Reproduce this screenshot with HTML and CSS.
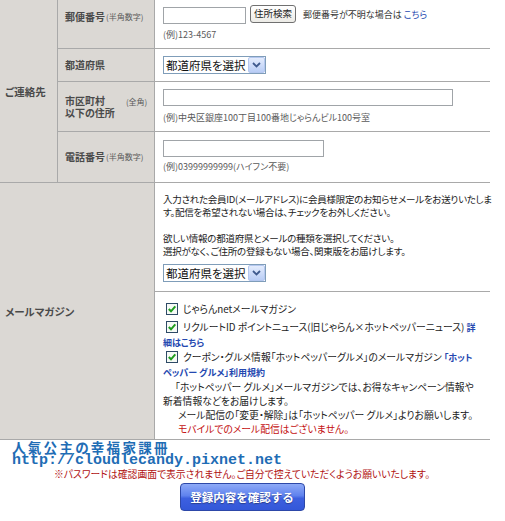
FILE: index.html
```html
<!DOCTYPE html>
<html lang="ja">
<head>
<meta charset="utf-8">
<title>会員登録</title>
<link rel="stylesheet" href="styles.css">
</head>
<body>
<div class="form">
  <div class="sec sec-contact"><b>ご連絡先</b></div>

  <div class="lbl lbl-top r1"><b>郵便番号</b><small>(半角数字)</small></div>
  <div class="fld fld-zip r1">
    <div class="inline">
      <input class="txt w-zip" type="text">
      <button class="btn-search" type="button">住所検索</button>
      <span class="note">郵便番号が不明な場合は <a class="link" href="#">こちら</a></span>
    </div>
    <div class="ex ex-zip">(例)123-4567</div>
  </div>

  <div class="lbl r2"><b>都道府県</b></div>
  <div class="fld fld-mid r2">
    <div class="sel"><span class="sel-text">都道府県を選択</span><span class="sel-btn"><svg width="9" height="6" viewBox="0 0 9 6"><path d="M1 1 L4.5 4.5 L8 1" fill="none" stroke="#3f5a8e" stroke-width="1.8"/></svg></span></div>
  </div>

  <div class="lbl r3">
    <b class="two">市区町村<br>以下の住所</b><small class="zen">(全角)</small>
  </div>
  <div class="fld fld-addr r3">
    <input class="txt w-addr" type="text">
    <div class="ex ex-addr">(例)中央区銀座100丁目100番地じゃらんビル100号室</div>
  </div>

  <div class="lbl r4"><b>電話番号</b><small>(半角数字)</small></div>
  <div class="fld fld-tel r4">
    <input class="txt w-tel" type="text">
    <div class="ex ex-tel">(例)03999999999(ハイフン不要)</div>
  </div>

  <div class="sec sec-mail"><b>メールマガジン</b></div>
  <div class="fld-mail r5">
    <div class="mail-top">
      <p class="para">入力された会員ID(メールアドレス)に会員様限定のお知らせメールをお送りいたしま<br>す。配信を希望されない場合は、チェックをお外しください。</p>
      <p class="para para-gap">欲しい情報の都道府県とメールの種類を選択してください。<br>選択がなく、ご住所の登録もない場合、関東版をお届けします。</p>
      <div class="sel sel-mail"><span class="sel-text">都道府県を選択</span><span class="sel-btn"><svg width="9" height="6" viewBox="0 0 9 6"><path d="M1 1 L4.5 4.5 L8 1" fill="none" stroke="#3f5a8e" stroke-width="1.8"/></svg></span></div>
    </div>
    <div class="mail-bottom">
      <p class="item item-first"><span class="chk"><svg width="12" height="12" viewBox="0 0 12 12"><rect x="0.5" y="0.5" width="11" height="11" fill="#f6faf6" stroke="#2e4a66"/><path d="M2.8 6 L5 8.3 L9.3 3.3" fill="none" stroke="#1f9d1f" stroke-width="2"/></svg></span>じゃらんnetメールマガジン</p>
      <p class="item"><span class="chk"><svg width="12" height="12" viewBox="0 0 12 12"><rect x="0.5" y="0.5" width="11" height="11" fill="#f6faf6" stroke="#2e4a66"/><path d="M2.8 6 L5 8.3 L9.3 3.3" fill="none" stroke="#1f9d1f" stroke-width="2"/></svg></span>リクルートID ポイントニュース(旧じゃらん×ホットペッパーニュース) <a class="link small" href="#">詳<br>細はこちら</a></p>
      <p class="item"><span class="chk"><svg width="12" height="12" viewBox="0 0 12 12"><rect x="0.5" y="0.5" width="11" height="11" fill="#f6faf6" stroke="#2e4a66"/><path d="M2.8 6 L5 8.3 L9.3 3.3" fill="none" stroke="#1f9d1f" stroke-width="2"/></svg></span>クーポン・グルメ情報「ホットペッパーグルメ」のメールマガジン <a class="link small" href="#">「ホット<br>ペッパー グルメ」利用規約</a></p>
      <p class="desc"><span class="ind1">「ホットペッパー グルメ」メールマガジンでは、お得なキャンペーン情報や</span><br>新着情報などをお届けします。<br><span class="ind2">メール配信の「変更・解除」は「ホットペッパー グルメ」よりお願いします。</span><br><span class="ind2 red">モバイルでのメール配信はございません。</span></p>
    </div>
  </div>
</div>

<div class="mark">
  <div class="mark-title">人氣公主の幸福家課冊</div>
  <div class="mark-url">http://cloudlecandy.pixnet.net</div>
</div>

<div class="footer">
  <p class="warn">※パスワードは確認画面で表示されません。ご自分で控えていただくようお願いいたします。</p>
  <button class="submit" type="button">登録内容を確認する</button>
</div>
</body>
</html>
```

FILE: styles.css
```css
html, body {
  margin: 0;
  padding: 0;
  background: #ffffff;
}

body {
  font-family: "Noto Sans CJK JP", "Noto Sans", sans-serif;
  font-feature-settings: "palt";
  color: #222222;
  font-size: 10px;
}

p { margin: 0; }

.form {
  display: grid;
  width: 490px;
  grid-template-columns: 58px 97px 335px;
  grid-template-rows: 49px 33px 50px 51px 257px;
}

.form > div {
  box-sizing: border-box;
  border-bottom: 1px solid #a9a9a9;
}

.sec {
  background: #dbd8d4;
  border-right: 1px solid #a9a9a9;
  display: flex;
  align-items: center;
  padding-left: 5px;
  color: #4a4a4a;
  font-size: 10.5px;
  line-height: 13px;
}

.sec-contact { grid-column: 1; grid-row: 1 / 5; }
.sec-mail { grid-column: 1 / 3; grid-row: 5; }

.r1 { grid-row: 1; }
.r2 { grid-row: 2; }
.r3 { grid-row: 3; }
.r4 { grid-row: 4; }
.r5 { grid-row: 5; }

.lbl {
  grid-column: 2;
  background: #dbd8d4;
  border-right: 1px solid #a9a9a9;
  display: flex;
  align-items: center;
  padding-left: 7px;
  overflow: hidden;
  color: #4a4a4a;
  font-size: 10px;
  line-height: 12px;
  white-space: nowrap;
}

.lbl small {
  font-size: 8px;
  color: #5a5a5a;
  margin-left: 1px;
}

.lbl-top {
  align-items: flex-start;
  padding-top: 11px;
}

.lbl .two { line-height: 12px; }

.lbl .zen {
  align-self: flex-start;
  margin-top: 15px;
  margin-left: 11px;
  line-height: 10px;
}

.fld {
  grid-column: 3;
  padding-left: 8px;
}

.fld-zip { padding-top: 4px; }
.fld-mid { display: flex; align-items: center; }
.fld-addr { padding-top: 7px; }
.fld-tel { padding-top: 8px; }

.inline {
  display: flex;
  align-items: center;
  white-space: nowrap;
  height: 19px;
}

.txt {
  box-sizing: border-box;
  height: 17px;
  margin: 0;
  border: 1px solid #a0a4a8;
  background: #fff;
  padding: 0 2px;
  display: block;
}

.inline .txt { margin-top: 3px; }

.w-zip { width: 83px; }
.w-addr { width: 290px; }
.w-tel { width: 161px; }

.btn-search {
  box-sizing: border-box;
  width: 46px;
  height: 18px;
  margin: 0 0 0 4px;
  padding: 0;
  border: 1px solid #707070;
  border-radius: 3px;
  background: linear-gradient(#ffffff, #ecebe6);
  font-family: inherit;
  font-size: 9.5px;
  color: #222;
  line-height: 15px;
}

.note {
  margin-left: 7px;
  font-size: 9px;
  color: #333;
  margin-top: 1px;
}

.link {
  color: #2448b0;
  text-decoration: none;
}

.ex {
  font-size: 9px;
  line-height: 12px;
  color: #5a5a5a;
  white-space: nowrap;
}

.ex-zip { margin-top: 6px; }
.ex-addr { margin-top: 6px; }
.ex-tel { margin-top: 4px; }

.sel {
  box-sizing: border-box;
  display: flex;
  align-items: center;
  width: 103px;
  height: 18px;
  border: 1px solid #7f9db9;
  background: #fff;
}

.sel-text {
  flex: 1;
  font-size: 11.5px;
  line-height: 16px;
  padding-left: 2px;
  color: #111;
  white-space: nowrap;
}

.sel-btn {
  box-sizing: border-box;
  width: 17px;
  height: 16px;
  display: flex;
  align-items: center;
  justify-content: center;
  background: linear-gradient(#e4ecfd, #b9cdf6);
  border: 1px solid #b4c7ef;
  border-radius: 2px;
}

.fld-mail {
  grid-column: 3;
  display: flex;
  flex-direction: column;
}

.mail-top {
  border-bottom: 1px solid #a9a9a9;
  padding: 10px 0 9px 8px;
}

.para {
  font-size: 9.5px;
  letter-spacing: -0.25px;
  line-height: 13px;
  white-space: nowrap;
}

.para-gap { margin-top: 13px; }

.sel-mail { margin-top: 6px; }

.mail-bottom {
  padding: 10px 0 0 8px;
}

.item {
  font-size: 9.8px;
  line-height: 14px;
  white-space: nowrap;
}

.item-first { margin-bottom: 4px; }

.chk {
  display: inline-block;
  vertical-align: -2px;
  margin: 0 5px 0 3px;
  width: 12px;
  height: 12px;
}

.chk svg { display: block; }

.small {
  font-size: 9px;
  font-weight: bold;
}

.desc {
  font-size: 9.8px;
  line-height: 14px;
  white-space: nowrap;
}

.ind1 { padding-left: 12px; }
.ind2 { padding-left: 15px; }

.red { color: #c41010; }

.mark {
  padding-left: 12px;
  color: #1f6db5;
  font-weight: bold;
}

.mark-title {
  font-size: 13.5px;
  letter-spacing: 2.3px;
  line-height: 14px;
}

.mark-url {
  font-family: "Liberation Mono", "DejaVu Sans Mono", monospace;
  font-size: 15px;
  line-height: 14px;
}

.footer {
  width: 484px;
  text-align: center;
}

.warn {
  font-size: 9.8px;
  line-height: 12px;
  color: #b01010;
  margin-top: 0;
}

.submit {
  box-sizing: border-box;
  width: 125px;
  height: 28px;
  margin-top: 3px;
  padding: 0;
  border: 1px solid #2d48a8;
  border-radius: 4px;
  background: linear-gradient(#8eaaf7 0%, #5f82ee 45%, #3d60e0 55%, #3357d8 100%);
  color: #ffffff;
  font-family: inherit;
  font-size: 11.5px;
  font-weight: bold;
  text-shadow: 0 1px 1px #2a3f8f;
}
```
